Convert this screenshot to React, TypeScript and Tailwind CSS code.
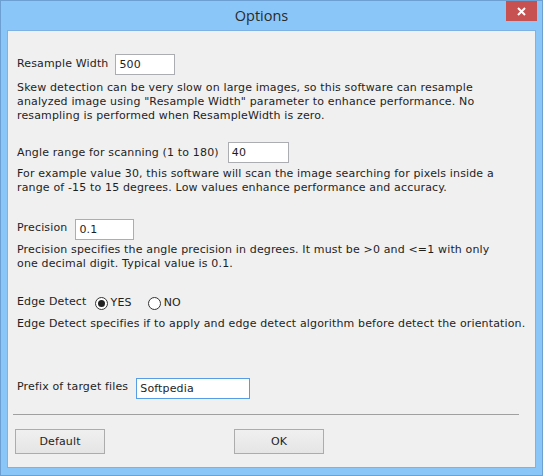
import { useState } from "react";

const body =
  "font-['DejaVu_Sans',Verdana,sans-serif] text-[11px] leading-[14px] tracking-[0.15px] text-[#1e1e1e]";

function TextBox({
  value,
  width,
  focused,
  onChange,
}: {
  value: string;
  width: number;
  focused?: boolean;
  onChange: (v: string) => void;
}) {
  return (
    <input
      value={value}
      onChange={(e) => onChange(e.target.value)}
      style={{ width }}
      className={
        "h-[21px] shrink-0 border bg-white px-[3px] outline-none " +
        body +
        (focused ? " border-[#569de5]" : " border-[#abadb3]")
      }
    />
  );
}

function Radio({ label, checked, onClick }: { label: string; checked: boolean; onClick: () => void }) {
  return (
    <button onClick={onClick} className="flex items-center gap-[3px]">
      <span className="flex h-[13px] w-[13px] items-center justify-center rounded-full border border-[#333] bg-white">
        {checked && <span className="h-[7px] w-[7px] rounded-full bg-[#222]" />}
      </span>
      <span className={body}>{label}</span>
    </button>
  );
}

function WinButton({ children }: { children: string }) {
  return (
    <button
      className={
        "h-[25px] w-[90px] border border-[#acacac] bg-gradient-to-b from-[#f0f0f0] to-[#e5e5e5] " + body
      }
    >
      {children}
    </button>
  );
}

export default function App() {
  const [resample, setResample] = useState("500");
  const [angle, setAngle] = useState("40");
  const [precision, setPrecision] = useState("0.1");
  const [edge, setEdge] = useState(true);
  const [prefix, setPrefix] = useState("Softpedia");

  return (
    <div className="flex h-[476px] w-[543px] flex-col border border-[#6d9fd3] bg-[#8bc6f9]">
      {/* title bar */}
      <div className="relative flex h-[29px] shrink-0 items-center justify-center pr-[20px]">
        <span className="font-['Open_Sans',sans-serif] text-[14.5px] text-[#2a2a2a]">Options</span>
        <button className="absolute right-[5px] top-0 flex h-[20px] w-[31px] items-center justify-center bg-[#c75050]">
          <svg width="9" height="9" viewBox="0 0 9 9">
            <path d="M1 1L8 8M8 1L1 8" stroke="white" strokeWidth="2" />
          </svg>
        </button>
      </div>

      {/* client area */}
      <div className="mx-[6px] mb-[7px] flex flex-1 flex-col border border-[#7fb2e4] bg-[#f0f0f0] pl-[9px]">
        <div className="mt-[23px] flex items-center gap-[7px]">
          <span className={body + " -mt-[1px]"}>Resample Width</span>
          <TextBox value={resample} width={60} onChange={setResample} />
        </div>
        <p className={body + " mt-[6px]"}>
          Skew detection can be very slow on large images, so this software can resample
          <br />
          analyzed image using "Resample Width" parameter to enhance performance. No
          <br />
          resampling is performed when ResampleWidth is zero.
        </p>

        <div className="mt-[19px] flex items-center gap-[9px]">
          <span className={body}>Angle range for scanning (1 to 180)</span>
          <TextBox value={angle} width={61} onChange={setAngle} />
        </div>
        <p className={body + " mt-[4px]"}>
          For example value 30, this software will scan the image searching for pixels inside a
          <br />
          range of -15 to 15 degrees. Low values enhance performance and accuracy.
        </p>

        <div className="mt-[24px] flex items-center gap-[8px]">
          <span className={body + " -mt-[4px]"}>Precision</span>
          <TextBox value={precision} width={59} onChange={setPrecision} />
        </div>
        <p className={body + " mt-[3px]"}>
          Precision specifies the angle precision in degrees. It must be &gt;0 and &lt;=1 with only
          <br />
          one decimal digit. Typical value is 0.1.
        </p>

        <div className="mt-[25px] flex items-center">
          <span className={body + " mr-[8px] -mt-[2px]"}>Edge Detect</span>
          <Radio label="YES" checked={edge} onClick={() => setEdge(true)} />
          <span className="w-[16px]" />
          <Radio label="NO" checked={!edge} onClick={() => setEdge(false)} />
        </div>
        <p className={body + " mt-[7px]"}>
          Edge Detect specifies if to apply and edge detect algorithm before detect the orientation.
        </p>

        <div className="mt-[47px] flex items-center gap-[8px]">
          <span className={body + " -mt-[3px]"}>Prefix of target files</span>
          <TextBox value={prefix} width={114} focused onChange={setPrefix} />
        </div>

        <div className="-ml-[4px] mr-[16px] mt-[15px] h-px bg-[#a0a0a0]" />

        <div className="-ml-[2px] mt-[14px] flex gap-[129px]">
          <WinButton>Default</WinButton>
          <WinButton>OK</WinButton>
        </div>
      </div>
    </div>
  );
}
